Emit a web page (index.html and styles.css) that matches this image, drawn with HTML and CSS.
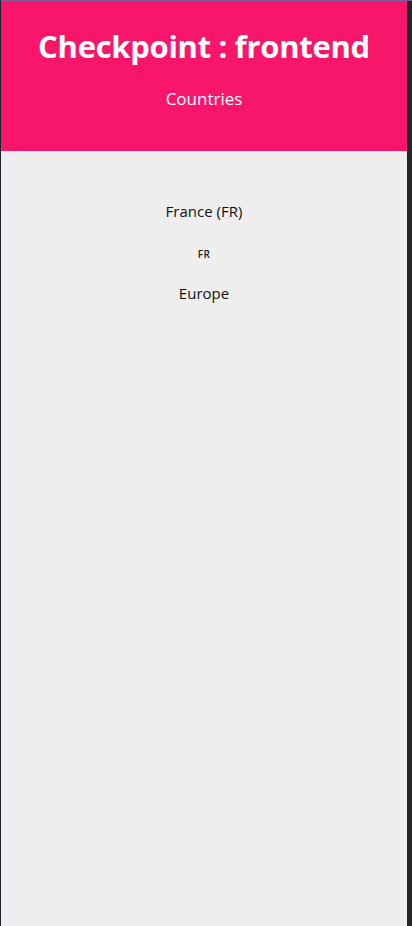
FILE: index.html
```html
<!DOCTYPE html>
<html lang="en">
<head>
<meta charset="utf-8">
<title>Checkpoint : frontend</title>
<link rel="stylesheet" href="styles.css">
</head>
<body>
<div class="app">
  <header class="header">
    <h1 class="title">Checkpoint : frontend</h1>
    <p class="subtitle">Countries</p>
  </header>
  <main class="content">
    <p class="country-name">France (FR)</p>
    <p class="country-code">FR</p>
    <p class="country-continent">Europe</p>
  </main>
</div>
</body>
</html>
```
FILE: styles.css
```css
html, body {
  margin: 0;
  padding: 0;
  height: 100%;
}
body {
  background: #252526;
  border-top: 1px solid #7a5c9e;
  border-left: 1px solid #1c2630;
  box-sizing: border-box;
  font-family: "Open Sans", "Noto Sans", sans-serif;
  display: flex;
}
.app {
  width: 406px;
  min-height: 100%;
  background: #eeeeee;
  display: flex;
  flex-direction: column;
}
.header {
  background: #f8166a;
  color: #ffffff;
  height: 150px;
  box-sizing: border-box;
  padding-top: 26px;
  display: flex;
  flex-direction: column;
  align-items: center;
}
.title {
  margin: 0;
  font-size: 31px;
  font-weight: 700;
  line-height: 38px;
  letter-spacing: -0.3px;
}
.subtitle {
  margin: 22px 0 0;
  font-size: 17px;
  line-height: 24px;
}
.content {
  display: flex;
  flex-direction: column;
  align-items: center;
  padding-top: 50px;
  color: #111111;
}
.country-name {
  margin: 0;
  font-size: 15px;
  line-height: 20px;
}
.country-code {
  margin: 26px 0 0;
  font-size: 10px;
  font-weight: 600;
  line-height: 14px;
  color: #222;
  letter-spacing: 0.5px;
}
.country-continent {
  margin: 22px 0 0;
  font-size: 15px;
  line-height: 20px;
}
```
